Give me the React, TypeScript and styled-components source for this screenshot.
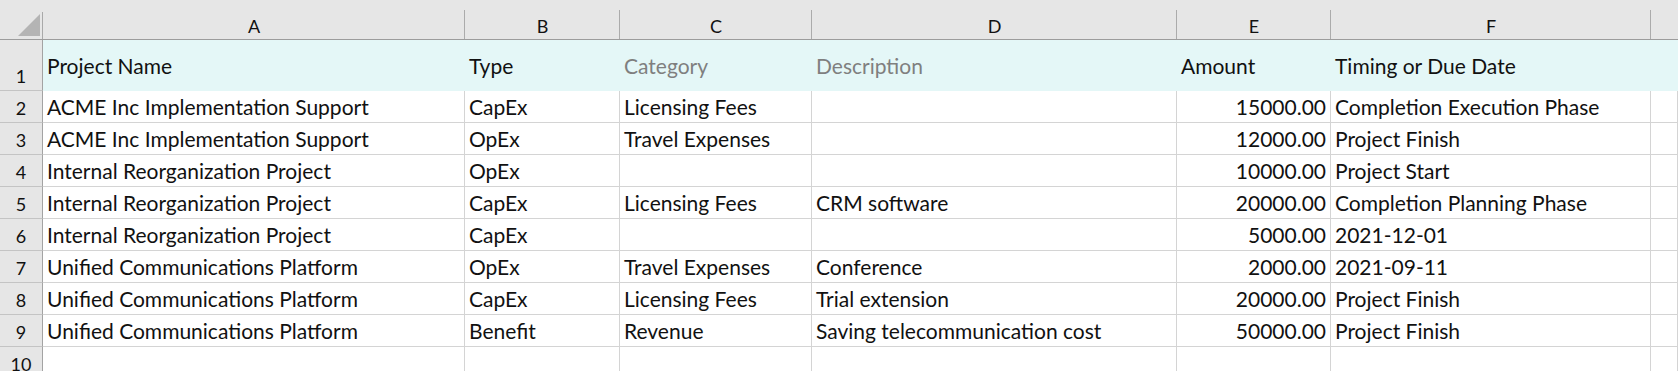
import React from "react";
import styled, { createGlobalStyle, css } from "styled-components";

const GlobalStyle = createGlobalStyle`
  html, body {
    margin: 0;
    padding: 0;
    background: #ffffff;
    overflow: hidden;
  }
  body {
    font-family: Lato, "Open Sans", "Liberation Sans", sans-serif;
  }
`;

const COLS = [
  { letter: "A", width: 422 },
  { letter: "B", width: 155 },
  { letter: "C", width: 192 },
  { letter: "D", width: 365 },
  { letter: "E", width: 154 },
  { letter: "F", width: 320 },
];

const HEADERS: { text: string; muted?: boolean }[] = [
  { text: "Project Name" },
  { text: "Type" },
  { text: "Category", muted: true },
  { text: "Description", muted: true },
  { text: "Amount" },
  { text: "Timing or Due Date" },
];

const ROWS: string[][] = [
  ["ACME Inc Implementation Support", "CapEx", "Licensing Fees", "", "15000.00", "Completion Execution Phase"],
  ["ACME Inc Implementation Support", "OpEx", "Travel Expenses", "", "12000.00", "Project Finish"],
  ["Internal Reorganization Project", "OpEx", "", "", "10000.00", "Project Start"],
  ["Internal Reorganization Project", "CapEx", "Licensing Fees", "CRM software", "20000.00", "Completion Planning Phase"],
  ["Internal Reorganization Project", "CapEx", "", "", "5000.00", "2021-12-01"],
  ["Unified Communications Platform", "OpEx", "Travel Expenses", "Conference", "2000.00", "2021-09-11"],
  ["Unified Communications Platform", "CapEx", "Licensing Fees", "Trial extension", "20000.00", "Project Finish"],
  ["Unified Communications Platform", "Benefit", "Revenue", "Saving telecommunication cost", "50000.00", "Project Finish"],
  ["", "", "", "", "", ""],
];

const Sheet = styled.div`
  display: grid;
  grid-template-columns: 43px ${COLS.map((c) => `${c.width}px`).join(" ")} 1fr;
  grid-template-rows: 40px 51px repeat(9, 32px);
  width: 1678px;
  height: 371px;
  overflow: hidden;
  color: #141414;
`;

const HEADER_BG = "#e6e6e6";

const Corner = styled.div`
  background:
    linear-gradient(#a9a9a9, #a9a9a9) right bottom / 1px 27px no-repeat,
    ${HEADER_BG};
  border-bottom: 1px solid #9c9c9c;
  box-sizing: border-box;
  display: flex;
  align-items: flex-end;
  justify-content: flex-end;
  padding: 0 3px 3px 0;
`;

const ColHeader = styled.div<{ $last?: boolean }>`
  background:
    ${(p) => (p.$last ? "" : "linear-gradient(#ababab, #ababab) right bottom / 1px 29px no-repeat,")}
    ${HEADER_BG};
  border-bottom: 1px solid #9c9c9c;
  box-sizing: border-box;
  display: flex;
  align-items: flex-end;
  justify-content: center;
  font-size: 18px;
  line-height: 18px;
  padding-bottom: 4px;
  color: #111111;
`;

const RowHeader = styled.div`
  background: ${HEADER_BG};
  border-right: 1px solid #a3a3a3;
  border-bottom: 1px solid #c4c4c4;
  box-sizing: border-box;
  display: flex;
  align-items: flex-end;
  justify-content: center;
  font-size: 18px;
  line-height: 18px;
  padding-bottom: 5px;
  color: #111111;
`;

const Cell = styled.div<{ $right?: boolean; $muted?: boolean; $title?: boolean }>`
  box-sizing: border-box;
  display: flex;
  white-space: nowrap;
  overflow: visible;
  font-size: 21px;
  line-height: 21px;
  padding: 0 4px 5px 4px;
  align-items: flex-end;
  justify-content: ${(p) => (p.$right ? "flex-end" : "flex-start")};
  color: ${(p) => (p.$muted ? "#7f7f7f" : "#111111")};
  border-right: 1px solid #d4d4d4;
  border-bottom: 1px solid #d4d4d4;
  ${(p) =>
    p.$title &&
    css`
      background: #e4f7f7;
      border-color: #e4f7f7;
      align-items: center;
      padding-bottom: 0;
      padding-top: 1px;
    `}
`;

const Triangle = () => (
  <svg width="22" height="22" viewBox="0 0 22 22">
    <polygon points="0,22 22,22 22,0" fill="#b4b4b4" />
  </svg>
);

export default function App() {
  return (
    <>
      <GlobalStyle />
      <Sheet>
        <Corner>
          <Triangle />
        </Corner>
        {COLS.map((c) => (
          <ColHeader key={c.letter}>{c.letter}</ColHeader>
        ))}
        <ColHeader $last />

        <RowHeader>1</RowHeader>
        {HEADERS.map((h, i) => (
          <Cell key={i} $title $muted={h.muted}>
            {h.text}
          </Cell>
        ))}
        <Cell $title />

        {ROWS.map((row, r) => (
          <React.Fragment key={r}>
            <RowHeader>{r + 2}</RowHeader>
            {row.map((v, i) => (
              <Cell key={i} $right={i === 4}>
                {v}
              </Cell>
            ))}
            <Cell />
          </React.Fragment>
        ))}
      </Sheet>
    </>
  );
}
